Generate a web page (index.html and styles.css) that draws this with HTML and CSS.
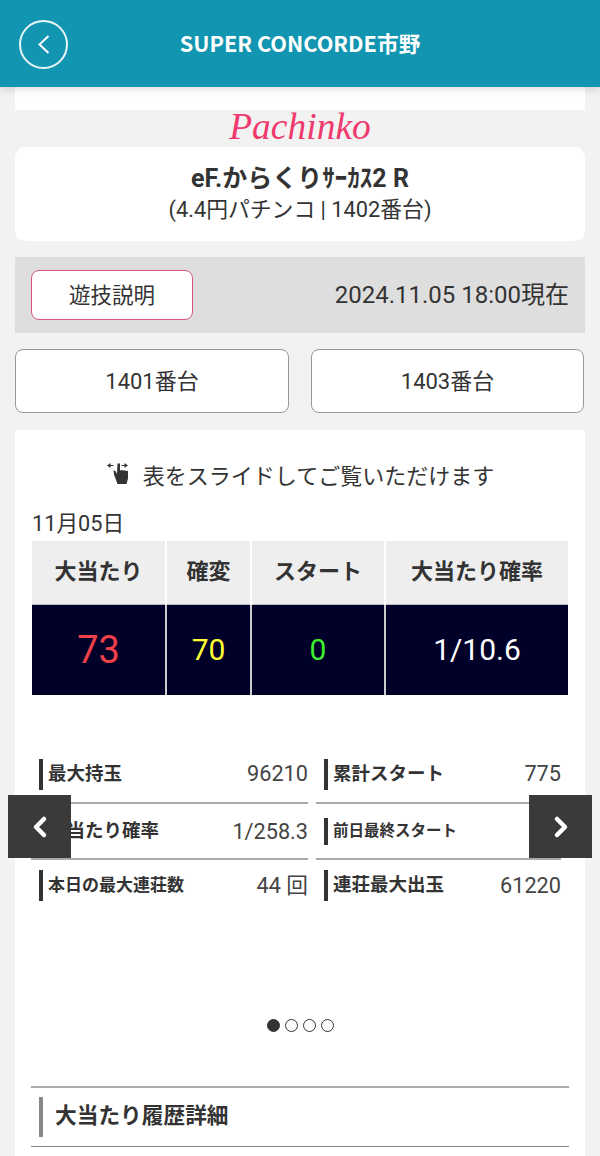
FILE: index.html
```html
<!DOCTYPE html>
<html lang="ja">

<head>
    <meta charset="UTF-8">
    <meta name="viewport" content="width=device-width, initial-scale=1.0">
    <title>SUPER CONCORDE市野</title>
    <link rel="stylesheet" href="styles.css">
</head>

<body>
    <header class="app-header">
        <a class="back-button" href="#">
            <svg width="14" height="20" viewBox="0 0 14 20" fill="none" stroke="#fff" stroke-width="2">
                <path d="M11.500 1 2.500 9.500l9 8.500" />
            </svg>
        </a>
        <h1>SUPER CONCORDE市野</h1>
    </header>

    <div class="top-strip"></div>
    <div class="category">Pachinko</div>

    <section class="machine-card">
        <h2>eF.からくりｻｰｶｽ2 R</h2>
        <p>(4.4円パチンコ | 1402番台)</p>
    </section>

    <div class="info-bar">
        <a class="guide-button" href="#">遊技説明</a>
        <span class="updated">2024.11.05 18:00現在</span>
    </div>

    <nav class="machine-nav">
        <a href="#">1401番台</a>
        <a href="#">1403番台</a>
    </nav>

    <main class="panel">
        <div class="slide-hint">
            <svg width="26" height="24" viewBox="0 0 26 24" fill="#333">
                <path d="M1 3.500 4.500 1v2h3v1h-3v2z" />
                <path d="M22 3.500 18.500 1v2h-3v1h3v2z" />
                <path d="M11.500 1.500h2.500v7l1.500-.5 1.500.5 1.500-.2 2 .7 1.500-.200v7.700l-1.500 5.500h-9l-3.500-9.500-.5-4 2 .5 1.500 3z" />
            </svg>
            <span>表をスライドしてご覧いただけます</span>
        </div>

        <div class="day-label">11月05日</div>

        <table class="summary">
            <thead>
                <tr>
                    <th class="col-hit">大当たり</th>
                    <th class="col-kakuhen">確変</th>
                    <th class="col-start">スタート</th>
                    <th>大当たり確率</th>
                </tr>
            </thead>
            <tbody>
                <tr>
                    <td class="big red">73</td>
                    <td class="yellow">70</td>
                    <td class="green">0</td>
                    <td class="white">1/10.6</td>
                </tr>
            </tbody>
        </table>

        <div class="carousel">
            <div class="stats">
                <div class="stat row-one">
                    <span class="stat-name">最大持玉</span>
                    <span class="stat-value">96210</span>
                </div>
                <div class="stat row-one">
                    <span class="stat-name">累計スタート</span>
                    <span class="stat-value">775</span>
                </div>
                <div class="stat row-two">
                    <span class="stat-name">大当たり確率</span>
                    <span class="stat-value">1/258.3</span>
                </div>
                <div class="stat row-two">
                    <span class="stat-name small">前日最終スタート</span>
                    <span class="stat-value"></span>
                </div>
                <div class="stat row-three">
                    <span class="stat-name medium">本日の最大連荘数</span>
                    <span class="stat-value">44 回</span>
                </div>
                <div class="stat row-three">
                    <span class="stat-name">連荘最大出玉</span>
                    <span class="stat-value">61220</span>
                </div>
            </div>
            <button class="arrow arrow-prev" type="button">
                <svg width="18" height="24" viewBox="0 0 18 24" fill="none" stroke="#fff" stroke-width="4.500" stroke-linecap="round" stroke-linejoin="round">
                    <path d="M13 4 5 12l8 8" />
                </svg>
            </button>
            <button class="arrow arrow-next" type="button">
                <svg width="18" height="24" viewBox="0 0 18 24" fill="none" stroke="#fff" stroke-width="4.500" stroke-linecap="round" stroke-linejoin="round">
                    <path d="m5 4 8 8-8 8" />
                </svg>
            </button>
        </div>

        <div class="dots">
            <span class="dot active"></span>
            <span class="dot"></span>
            <span class="dot"></span>
            <span class="dot"></span>
        </div>

        <div class="history-title">
            <h3>大当たり履歴詳細</h3>
        </div>
    </main>
</body>

</html>
```

FILE: styles.css
```css
* {
    box-sizing: border-box;
    margin: 0;
    padding: 0;
}

body {
    height: 1156px;
    overflow: hidden;
    background: #f2f2f2;
    color: #333;
    font-family: Roboto, "Noto Sans CJK JP", sans-serif;
}

a {
    color: inherit;
    text-decoration: none;
}

.app-header {
    position: relative;
    height: 87px;
    background: #1295b0;
    display: flex;
    align-items: center;
    justify-content: center;
    box-shadow: 0 2px 8px rgba(0, 0, 0, 0.15);
}

.app-header h1 {
    color: #fff;
    font-family: "Noto Sans CJK JP", sans-serif;
    font-size: 21.700px;
    font-weight: 700;
    margin-bottom: 3px;
}

.back-button {
    position: absolute;
    left: 19px;
    top: 20px;
    width: 49px;
    height: 49px;
    border: 2px solid #e8f6f8;
    border-radius: 50%;
    display: flex;
    align-items: center;
    justify-content: center;
}

.top-strip {
    height: 23px;
    margin: 0 15px;
    background: #fff;
}

.category {
    height: 37px;
    color: #ee3a6c;
    font-family: "Liberation Serif", serif;
    font-size: 37.500px;
    font-style: italic;
    line-height: 33px;
    text-align: center;
}

.machine-card {
    height: 94px;
    margin: 0 15px;
    padding-top: 16px;
    background: #fff;
    border-radius: 10px;
    text-align: center;
}

.machine-card h2 {
    font-size: 25px;
    font-weight: 700;
    line-height: 32px;
}

.machine-card p {
    font-size: 21.800px;
    line-height: 30px;
}

.info-bar {
    height: 76px;
    margin: 16px 15px 0;
    padding: 0 16px;
    background: #dedede;
    display: flex;
    align-items: center;
    justify-content: space-between;
}

.guide-button {
    width: 162px;
    height: 50px;
    padding-bottom: 4px;
    background: #fff;
    border: 1px solid #d9577f;
    border-radius: 8px;
    font-size: 21.500px;
    display: flex;
    align-items: center;
    justify-content: center;
}

.updated {
    margin-bottom: 6px;
    font-size: 24px;
}

.machine-nav {
    margin: 16px 15px 0;
    display: grid;
    grid-template-columns: 274px 273px;
    column-gap: 22px;
}

.machine-nav a {
    height: 64px;
    padding-bottom: 5px;
    background: #fff;
    border: 1px solid #999;
    border-radius: 8px;
    font-size: 22px;
    display: flex;
    align-items: center;
    justify-content: center;
}

.panel {
    height: 760px;
    margin: 17px 15px 0;
    padding: 0 16px;
    background: #fff;
}

.slide-hint {
    height: 67px;
    padding-top: 21px;
    display: flex;
    align-items: center;
    justify-content: center;
    column-gap: 11px;
    font-size: 22px;
}

.day-label {
    margin-top: 14px;
    padding-left: 1px;
    font-size: 21.700px;
    line-height: 26px;
}

.summary {
    width: 536px;
    margin: 4px 0 0 1px;
    border-collapse: collapse;
    table-layout: fixed;
}

.summary th {
    height: 63px;
    padding-bottom: 6px;
    background: #eee;
    border-left: 2px solid #fff;
    border-bottom: 1px solid #bbb;
    font-size: 22px;
    font-weight: 700;
}

.summary td {
    height: 91px;
    background: #000028;
    border-left: 2px solid #ccc;
    font-size: 30px;
    text-align: center;
}

.summary th:first-child,
.summary td:first-child {
    border-left: 0;
}

.col-hit {
    width: 134px;
}

.col-kakuhen {
    width: 85px;
}

.col-start {
    width: 134px;
}

.summary .big {
    font-size: 38px;
}

.red {
    color: #f0404a;
}

.yellow {
    color: #ffff33;
}

.green {
    color: #3cf02c;
}

.white {
    color: #fff;
}

.carousel {
    position: relative;
    margin-top: 63px;
}

.stats {
    width: 530px;
    display: grid;
    grid-template-columns: 277px 245px;
    column-gap: 8px;
}

.stat {
    padding-left: 8px;
    display: flex;
    align-items: center;
    justify-content: space-between;
    border-bottom: 2px solid #aaa;
}

.row-one {
    height: 46px;
    padding-bottom: 12px;
}

.row-two {
    height: 56px;
    padding-top: 13px;
    padding-bottom: 12px;
}

.row-three {
    height: 52px;
    padding-top: 10px;
    align-items: flex-start;
    border-bottom: 0;
}

.stat-name {
    padding-left: 5px;
    border-left: 4px solid #333;
    font-size: 18.500px;
    font-weight: 700;
    line-height: 31px;
}

.stat-name.medium {
    font-size: 17px;
}

.stat-name.small {
    font-size: 15.500px;
    line-height: 27px;
}

.stat-value {
    font-size: 21.700px;
    line-height: 32px;
    color: #444;
}

.arrow {
    position: absolute;
    top: 37px;
    width: 63px;
    height: 63px;
    border: none;
    background: #3a3a3a;
    display: flex;
    align-items: center;
    justify-content: center;
}

.arrow-prev {
    left: -23px;
}

.arrow-next {
    right: -23px;
}

.dots {
    margin-top: 107px;
    display: flex;
    justify-content: center;
    column-gap: 5px;
}

.dot {
    width: 13px;
    height: 13px;
    border: 1.500px solid #333;
    border-radius: 50%;
}

.dot.active {
    background: #333;
}

.history-title {
    width: 538px;
    height: 61px;
    margin-top: 54px;
    padding: 9px 0 0 8px;
    border-top: 2px solid #aaa;
    border-bottom: 1px solid #888;
}

.history-title h3 {
    height: 40px;
    padding-left: 12px;
    border-left: 4px solid #888;
    font-size: 21.700px;
    font-weight: 700;
    line-height: 37px;
}
```
